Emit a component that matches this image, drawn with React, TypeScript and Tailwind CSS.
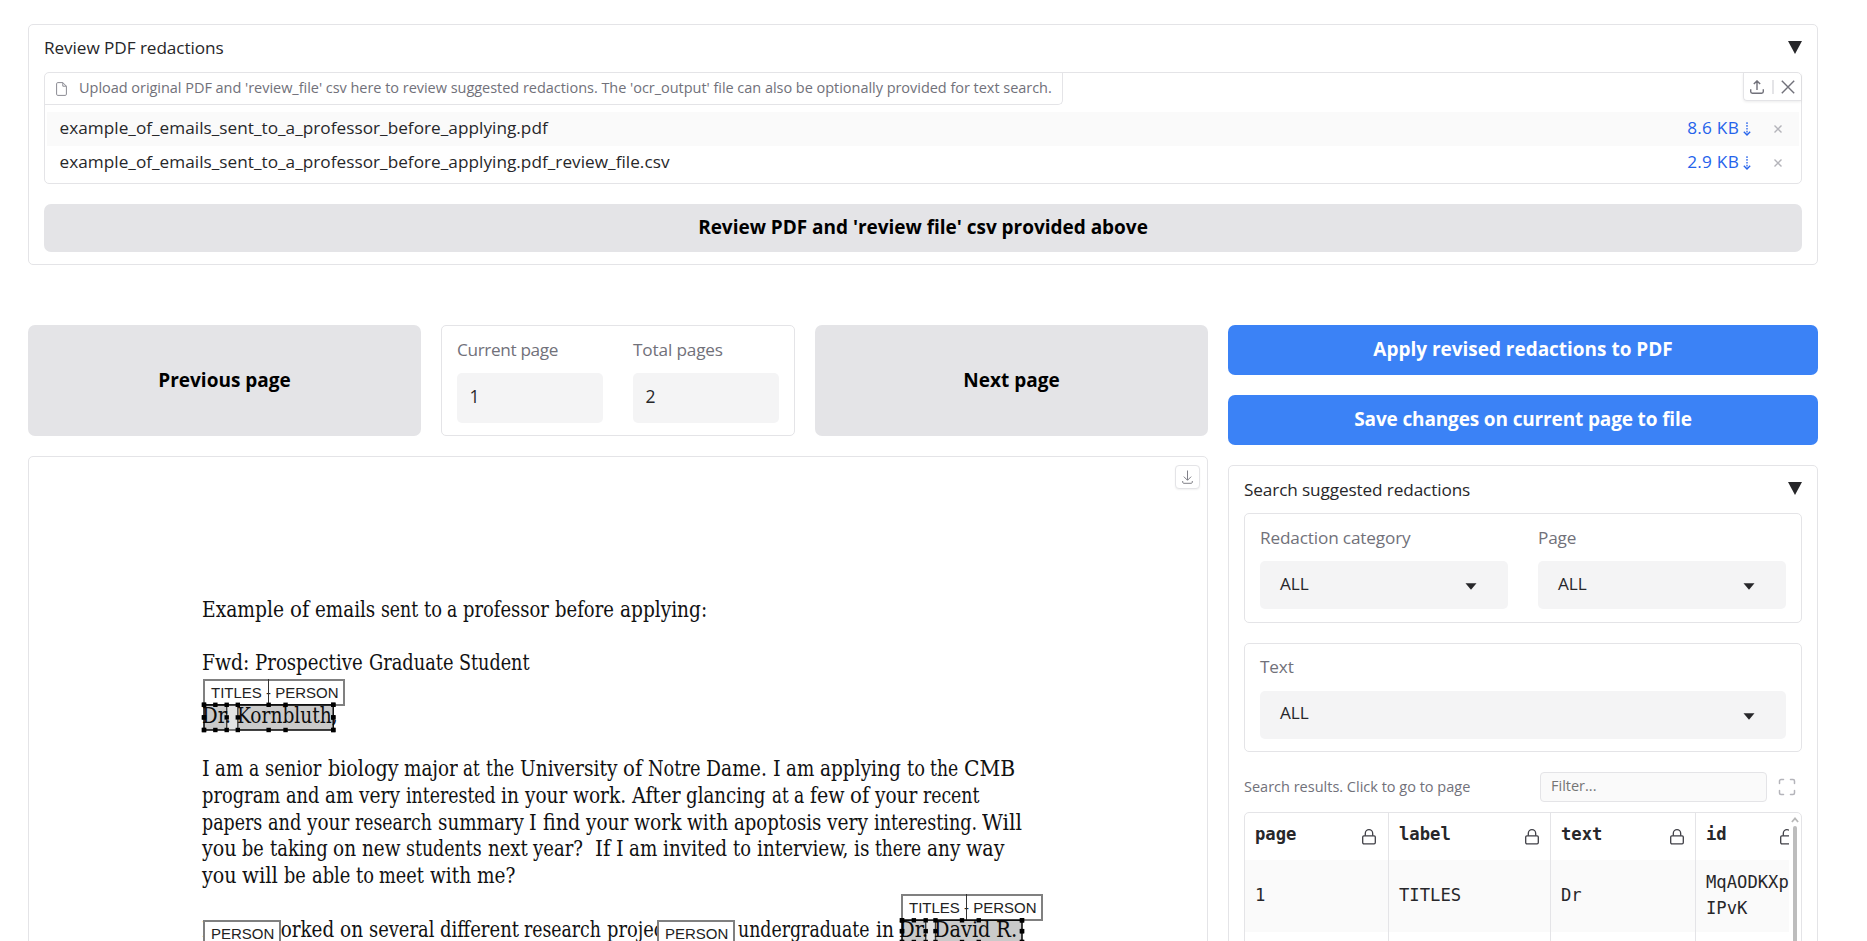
import { useMemo, type ReactNode } from 'react';

const PDF_SIZE = 23.08;
let measureContext: CanvasRenderingContext2D | null = null;

function measure(text: string, family: string) {
  if (!measureContext) measureContext = document.createElement('canvas').getContext('2d');
  const ctx = measureContext!;
  ctx.font = `${PDF_SIZE}px "${family}"`;
  return ctx.measureText(text).width;
}

/** One line of the rendered page: each word keeps the advance width of the document's embedded font. */
function PdfLine({ text }: { text: string }) {
  const words = useMemo(
    () =>
      text.split(' ').map((word) => {
        const width = measure(word, 'Liberation Serif');
        const drawn = measure(word, 'DejaVu Serif Condensed');
        return { word, width, scale: drawn ? width / drawn : 1 };
      }),
    [text],
  );
  return (
    <div className="flex h-[26.65px] gap-[5.77px] whitespace-pre leading-[26.65px]">
      {words.map((w, i) => (
        <span key={i} className="block shrink-0" style={{ width: w.width }}>
          <span className="block w-max origin-left" style={{ transform: `scaleX(${w.scale})` }}>
            {w.word}
          </span>
        </span>
      ))}
    </div>
  );
}

const paragraphs = [
  ['Example of emails sent to a professor before applying:'],
  ['Fwd: Prospective Graduate Student'],
  ['Dr. Kornbluth,'],
  [
    'I am a senior biology major at the University of Notre Dame. I am applying to the CMB',
    'program and am very interested in your work. After glancing at a few of your recent',
    'papers and your research summary I find your work with apoptosis very interesting. Will',
    'you be taking on new students next year?  If I am invited to interview, is there any way',
    'you will be able to meet with me?',
  ],
  ['I have worked on several different research projects as an undergraduate in Dr. David R.'],
];

function Handles({ x1, y1, x2, y2 }: { x1: number; y1: number; x2: number; y2: number }) {
  const mx = (x1 + x2) / 2;
  const my = (y1 + y2) / 2;
  const points = [
    [x1, y1], [mx, y1], [x2, y1],
    [x1, my], [x2, my],
    [x1, y2], [mx, y2], [x2, y2],
  ];
  return (
    <g>
      <rect x={x1} y={y1} width={x2 - x1} height={y2 - y1} fill="#000" fillOpacity="0.11" stroke="#000" strokeOpacity="0.7" strokeWidth="1.4" />
      {points.map(([x, y], i) => (
        <rect key={i} x={x - 2.2} y={y - 2.2} width="4.4" height="4.4" fill="#000" />
      ))}
    </g>
  );
}

function Marks() {
  return (
    <svg className="absolute left-0 top-0" width="1178" height="484" viewBox="29 457 1178 484">
      <Handles x1={204} y1={704.8} x2={333.3} y2={730} />
      <Handles x1={204} y1={704.8} x2={226.7} y2={730} />
      <Handles x1={237.8} y1={704.8} x2={333.3} y2={730} />
      <Handles x1={902} y1={920.3} x2={1022} y2={942} />
      <Handles x1={902} y1={920.3} x2={925.7} y2={942} />
      <Handles x1={935.5} y1={920.3} x2={1022} y2={942} />
    </svg>
  );
}

function Tag({ className, children }: { className: string; children: ReactNode }) {
  return (
    <div
      className={`absolute h-[26.5px] whitespace-pre border-2 border-[#808080] bg-white pl-[6px] font-['Liberation_Sans',Arial,sans-serif] text-[15px] leading-[24px] text-[#222] ${className}`}
    >
      {children}
    </div>
  );
}

function Triangle() {
  return (
    <svg width="14" height="13" viewBox="0 0 14 13" className="mb-[3px] shrink-0">
      <path d="M0 0h14L7 13z" fill="#27272a" />
    </svg>
  );
}

function Label({ children }: { children: ReactNode }) {
  return <div className="h-6 text-[17.2px] leading-6 tracking-[-0.15px] text-[#71717a]">{children}</div>;
}

function NumberBox({ label, value }: { label: ReactNode; value: string }) {
  return (
    <div className="flex w-[146px] flex-col gap-[11px]">
      <Label>{label}</Label>
      <div className="flex h-[50px] items-center rounded-[5px] bg-[#f4f4f5] pb-[3px] pl-[12.5px] text-[17.5px]">{value}</div>
    </div>
  );
}

function Select({ className, pad }: { className: string; pad: string }) {
  return (
    <div className={`flex h-12 items-center justify-between rounded-[5px] bg-[#f4f4f5] pl-5 pr-[31px] ${className}`}>
      <span className={`text-[17.2px] ${pad}`}>ALL</span>
      <svg width="12" height="7" viewBox="0 0 12 7" className="mt-[3px]">
        <path d="M.5.3h11L6 6.7z" fill="#27272a" />
      </svg>
    </div>
  );
}

function Lock() {
  return (
    <svg width="14" height="16" viewBox="0 0 14 16" fill="none" stroke="#3f3f46" strokeWidth="1.3" className="shrink-0">
      <rect x=".7" y="6.8" width="12.6" height="8" rx="1.2" />
      <path d="M3.3 6.8V4.4a3.7 3.7 0 0 1 7.4 0v2.4" />
    </svg>
  );
}

const files = [
  { name: 'example_of_emails_sent_to_a_professor_before_applying.pdf', size: '8.6 KB', bg: 'bg-[#fafafa]' },
  { name: 'example_of_emails_sent_to_a_professor_before_applying.pdf_review_file.csv', size: '2.9 KB', bg: 'bg-white' },
];

function FileCard() {
  return (
    <section className="flex h-[241px] flex-col rounded-[5px] border border-[#e4e4e7] px-[15px]">
      <div className="flex h-[47px] items-center justify-between pt-px">
        <span className="pb-[3px] text-[17.2px] tracking-[-0.08px]">Review PDF redactions</span>
        <Triangle />
      </div>
      <div className="h-[112px] rounded-[5px] border border-[#e4e4e7]">
        <div className="flex h-[39px] items-start justify-between">
          <div className="flex h-[32px] w-[1018px] items-center rounded-br-[5px] border-b border-r border-[#e4e4e7] pl-[11px] text-[14.5px] tracking-[-0.032px] text-[#71717a]">
            <svg width="11" height="14" viewBox="0 0 11 14" fill="none" stroke="#8b8b93" strokeWidth="1" className="mr-3">
              <path d="M6.8.6H1.8a1.2 1.2 0 0 0-1.2 1.2v10.4a1.2 1.2 0 0 0 1.2 1.2h7.4a1.2 1.2 0 0 0 1.2-1.2V4.2zM6.8.6v3.6h3.6" />
            </svg>
            <span className="whitespace-nowrap pb-px">
              Upload original PDF and 'review_file' csv here to review suggested redactions. The 'ocr_output' file can also
              be optionally provided for text search.
            </span>
          </div>
          <div className="flex h-[28px] w-[58px] items-center rounded-bl-[4px] border-b border-l border-[#e4e4e7] pl-[6px] text-[#71717a] shadow-[0_1px_3px_rgba(0,0,0,0.08)]">
            <svg width="14" height="14" viewBox="0 0 14 14" fill="none" stroke="currentColor" strokeWidth="1.4">
              <path d="M.7 9.200v2.400c0 1 .7 1.700 1.700 1.700h9.200c1 0 1.700-.7 1.700-1.700V9.200M7 10V1M3.800 4 7 .9 10.200 4" />
            </svg>
            <span className="ml-[8px] h-[14px] w-[2px] bg-[#e4e4e7]" />
            <svg width="14" height="14" viewBox="0 0 14 14" fill="none" stroke="currentColor" strokeWidth="1.4" className="ml-[7px]">
              <path d="M.8.8l12.400 12.400M13.200.8.8 13.200" />
            </svg>
          </div>
        </div>
        <div className="px-[2px]">
          {files.map((f) => (
            <div key={f.size} className={`flex h-[34px] items-center pb-[3px] pl-[12.5px] text-[17.2px] ${f.bg}`}>
              <span className="grow tracking-[0.03px]">{f.name}</span>
              <span className="tracking-[0.25px] text-[#2563eb]">{f.size}</span>
              <svg width="8" height="14" viewBox="0 0 8 14" fill="none" stroke="#2563eb" strokeWidth="1.3" className="ml-[4px] mt-[2px]">
                <path d="M4 .3v12" strokeDasharray="1.700 1.100" />
                <path d="M.8 9.800 4 13l3.200-3.200" />
              </svg>
              <svg width="8" height="8" viewBox="0 0 8 8" stroke="#b4b4ba" strokeWidth="1.4" className="ml-[23px] mr-[17px] mt-[3px]">
                <path d="M.5.500l7 7M7.500.500l-7 7" />
              </svg>
            </div>
          ))}
        </div>
      </div>
      <button className="mt-5 h-12 rounded-[7px] bg-[#e4e4e7] pb-[2px] text-[19px] font-bold tracking-[-0.02px] text-black">
        Review PDF and 'review file' csv provided above
      </button>
    </section>
  );
}

function Document() {
  return (
    <div className="relative mt-[20px] h-[500px] rounded-t-[5px] border border-[#e4e4e7]">
      <div className="flex flex-col gap-[26.65px] pl-[173px] pt-[138.5px] font-['DejaVu_Serif_Condensed','DejaVu_Serif',serif] text-[23.08px] text-[#111]">
        {paragraphs.map((lines, i) => (
          <div key={i} className={i === 4 ? 'pt-px' : ''}>
            {lines.map((line) => (
              <PdfLine key={line} text={line} />
            ))}
          </div>
        ))}
      </div>
      <Tag className="left-[174px] top-[222px] w-[142px]">TITLES - PERSON</Tag>
      <div className="absolute left-[174px] top-[222px] h-[26px] w-[65.5px] border-r border-[#333]" />
      <Tag className="left-[872px] top-[437px] w-[142px]">TITLES - PERSON</Tag>
      <div className="absolute left-[872px] top-[437px] h-[26px] w-[65.5px] border-r border-[#333]" />
      <Tag className="left-[174px] top-[463px] w-[77.5px]">PERSON</Tag>
      <Tag className="left-[628px] top-[463px] w-[77.5px]">PERSON</Tag>
      <Marks />
      <button className="absolute right-[7px] top-[8px] flex h-6 w-[25px] items-center justify-center rounded-[4px] border border-[#e4e4e7] bg-white text-[#808088] shadow-[0_1px_2px_rgba(0,0,0,0.06)]">
        <svg width="11" height="14" viewBox="0 0 11 14" fill="none" stroke="currentColor" strokeWidth="1">
          <path d="M.7 11v1.200c0 .7.400 1.100 1.100 1.100h7.400c.7 0 1.100-.4 1.100-1.100V11M5.500.500v9.600M1.800 6.600l3.700 3.700 3.700-3.700" />
        </svg>
      </button>
    </div>
  );
}

const columns = [
  { name: 'page', w: 'w-[144px]', end: 'pr-[12px]' },
  { name: 'label', w: 'w-[162px]', end: 'pr-[11px]' },
  { name: 'text', w: 'w-[145px]', end: 'pr-[11px]' },
  { name: 'id', w: 'w-[110px]', end: 'pr-[12px]' },
];
const row = ['1', 'TITLES', 'Dr', 'MqAODKXp\nIPvK'];

function ResultsTable() {
  return (
    <div className="mt-[10px] flex h-[160px] rounded-t-[5px] border border-[#e4e4e7] font-['DejaVu_Sans_Mono',monospace] text-[17.2px]">
      <div className="flex w-[544px] shrink-0 overflow-hidden">
        {columns.map((c, i) => (
          <div key={c.name} className={`shrink-0 ${c.w} ${i < 3 ? 'border-r border-[#e4e4e7]' : ''}`}>
            <div className={`flex h-[47px] items-center justify-between pl-[10px] font-bold ${c.end}`}>
              <span className="pb-[3px]">{c.name}</span>
              <Lock />
            </div>
            <div className="flex h-[72px] items-center whitespace-pre bg-[#fafafa] pb-[3px] pl-[10px] leading-[26px]">{row[i]}</div>
          </div>
        ))}
      </div>
      <div className="flex flex-col items-center pl-[2px] pt-[4px]">
        <svg width="8" height="6" viewBox="0 0 8 6" fill="none" stroke="#b8b8b8" strokeWidth="1.800">
          <path d="M.8 5.200 4 1.500l3.200 3.700" />
        </svg>
        <div className="mt-[3px] h-[150px] w-[4px] rounded-full bg-[#bdbdbd]" />
      </div>
    </div>
  );
}

function SearchPanel() {
  return (
    <section className="mt-5 h-[500px] rounded-t-[5px] border border-[#e4e4e7] px-[15px]">
      <div className="flex h-[47px] items-center justify-between pt-px">
        <span className="text-[17.2px] tracking-[-0.12px]">Search suggested redactions</span>
        <Triangle />
      </div>
      <div className="flex h-[110px] gap-[30px] rounded-[5px] border border-[#e4e4e7] pl-[15px] pt-[12px]">
        <div className="flex flex-col gap-[11px]">
          <Label>Redaction category</Label>
          <Select className="w-[248px]" pad="pb-[3px]" />
        </div>
        <div className="flex flex-col gap-[11px]">
          <Label>Page</Label>
          <Select className="w-[248px]" pad="pb-[3px]" />
        </div>
      </div>
      <div className="mt-5 flex h-[109px] flex-col gap-[12px] rounded-[5px] border border-[#e4e4e7] px-[15px] pt-[11px]">
        <Label>Text</Label>
        <Select className="w-[526px]" pad="pb-[5px]" />
      </div>
      <div className="mt-[20px] flex h-[30px] items-center">
        <span className="w-[296px] text-[14.5px] text-[#71717a]">Search results. Click to go to page</span>
        <div className="flex h-[30px] w-[227px] items-center rounded-[4px] border border-[#e4e4e7] bg-[#fafafa] pb-[3px] pl-[10px] text-[14.5px] text-[#757575]">
          Filter...
        </div>
        <svg width="18" height="18" viewBox="0 0 18 18" fill="none" stroke="#b4b4ba" strokeWidth="1.500" strokeLinecap="round" className="ml-[11px]">
          <path d="M1.500 5.500V3a1.500 1.500 0 0 1 1.500-1.500h2.500M12.500 1.500H15A1.500 1.500 0 0 1 16.500 3v2.500M16.500 12.500V15a1.500 1.500 0 0 1-1.500 1.500h-2.500M5.500 16.500H3A1.500 1.500 0 0 1 1.500 15v-2.500" />
        </svg>
      </div>
      <ResultsTable />
    </section>
  );
}

export default function App() {
  return (
    <div className="h-[941px] overflow-hidden bg-white pl-[28px] pt-6 font-['Open_Sans',sans-serif] text-[#27272a]">
      <div className="w-[1790px]">
        <FileCard />
        <div className="mt-[60px] flex gap-5">
          <div className="w-[1180px]">
            <div className="flex h-[111px] gap-5">
              <button className="w-[393px] rounded-[7px] bg-[#e4e4e7] pb-px text-[19px] font-bold text-black">
                Previous page
              </button>
              <div className="flex w-[354px] gap-[30px] rounded-[5px] border border-[#e4e4e7] pl-[15px] pt-[12px]">
                <NumberBox label={<span className="tracking-[-0.35px]">Current page</span>} value="1" />
                <NumberBox label="Total pages" value="2" />
              </div>
              <button className="w-[393px] rounded-[7px] bg-[#e4e4e7] pb-px text-[19px] font-bold text-black">
                Next page
              </button>
            </div>
            <Document />
          </div>
          <div className="w-[590px]">
            <div className="flex flex-col gap-5">
              <button className="h-[50px] rounded-[7px] bg-[#3b82f6] pb-[2px] text-[19px] font-bold tracking-[-0.02px] text-white">
                Apply revised redactions to PDF
              </button>
              <button className="h-[50px] rounded-[7px] bg-[#3b82f6] pb-[2px] text-[19px] font-bold tracking-[-0.14px] text-white">
                Save changes on current page to file
              </button>
            </div>
            <SearchPanel />
          </div>
        </div>
      </div>
    </div>
  );
}
